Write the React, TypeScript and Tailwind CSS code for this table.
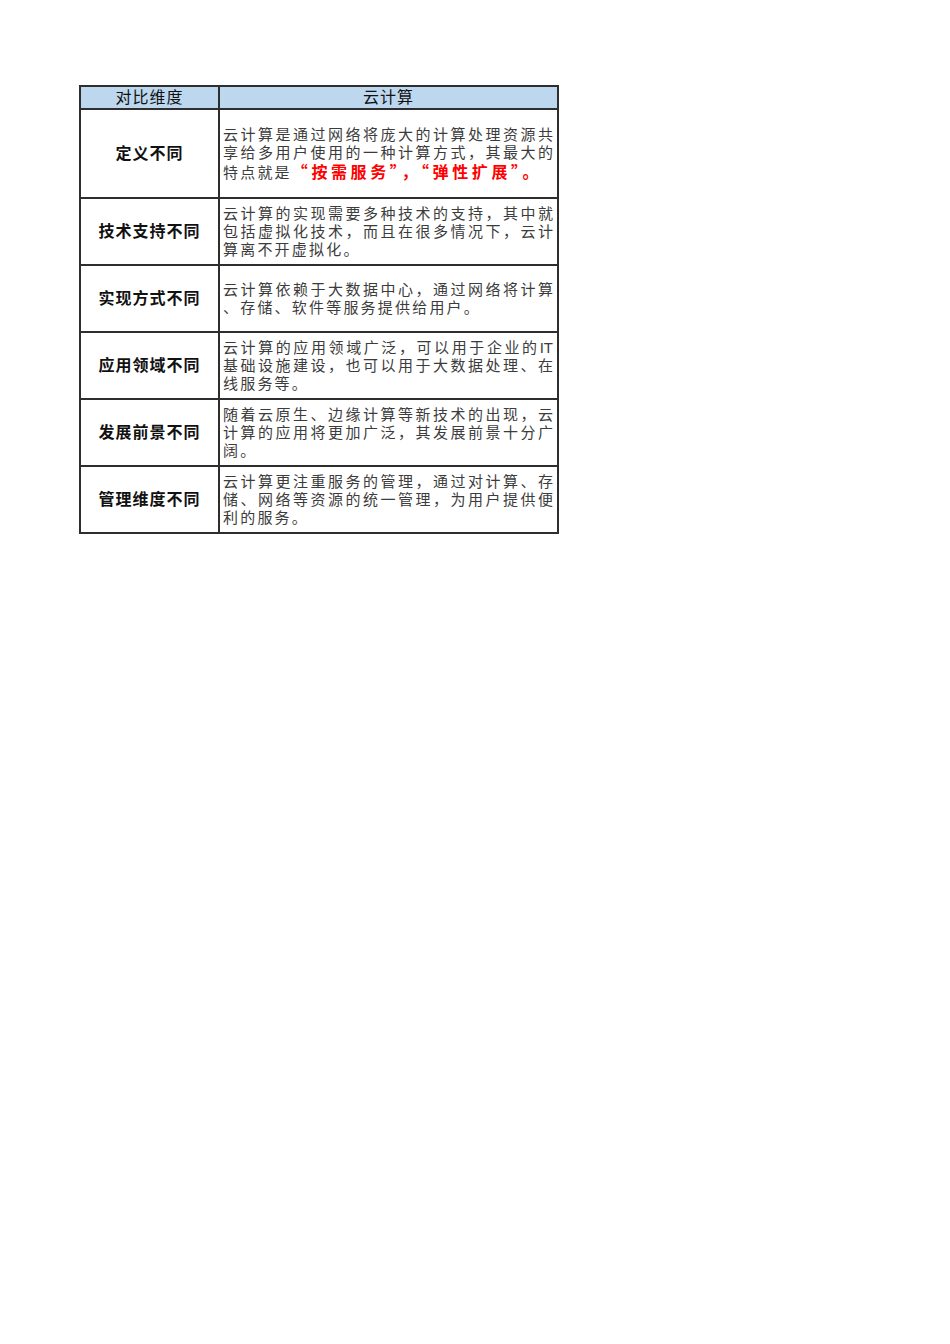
import React from 'react';

type Row = {
  label: string;
  lines: React.ReactNode[];
  height: string;
};

const rows: Row[] = [
  {
    label: '定义不同',
    height: 'h-[89px]',
    lines: [
      '云计算是通过网络将庞大的计算处理资源共',
      '享给多用户使用的一种计算方式，其最大的',
      <>
        特点就是
        <span className="font-['Noto_Sans_CJK_SC',sans-serif] text-[16px] font-bold tracking-[3.6px] text-[#ff0000]">
          “按需服务”，“弹性扩展”。
        </span>
      </>,
    ],
  },
  {
    label: '技术支持不同',
    height: 'h-[67px]',
    lines: ['云计算的实现需要多种技术的支持，其中就', '包括虚拟化技术，而且在很多情况下，云计', '算离不开虚拟化。'],
  },
  {
    label: '实现方式不同',
    height: 'h-[67px]',
    lines: ['云计算依赖于大数据中心，通过网络将计算', '、存储、软件等服务提供给用户。'],
  },
  {
    label: '应用领域不同',
    height: 'h-[67px]',
    lines: ['云计算的应用领域广泛，可以用于企业的IT', '基础设施建设，也可以用于大数据处理、在', '线服务等。'],
  },
  {
    label: '发展前景不同',
    height: 'h-[67px]',
    lines: ['随着云原生、边缘计算等新技术的出现，云', '计算的应用将更加广泛，其发展前景十分广', '阔。'],
  },
  {
    label: '管理维度不同',
    height: 'h-[67px]',
    lines: ['云计算更注重服务的管理，通过对计算、存', '储、网络等资源的统一管理，为用户提供便', '利的服务。'],
  },
];

const font = "font-['Liberation_Sans','Noto_Sans_CJK_SC',sans-serif]";

export default function App() {
  return (
    <div className={`min-h-[1344px] w-[950px] bg-white pl-[79px] pt-[85px] ${font}`}>
      <table className="w-[480px] table-fixed border-collapse border-2 border-[#2e2e2e]">
        <colgroup>
          <col className="w-[139px]" />
          <col />
        </colgroup>
        <thead>
          <tr className="h-[23px] bg-[#bdd7ee]">
            <th className="border-2 border-[#2e2e2e] p-0 text-center text-[16px] font-normal leading-[20px] tracking-[1px] text-[#111]">
              对比维度
            </th>
            <th className="border-2 border-[#2e2e2e] p-0 text-center text-[16px] font-normal leading-[20px] tracking-[1px] text-[#111]">
              云计算
            </th>
          </tr>
        </thead>
        <tbody>
          {rows.map((row) => (
            <tr key={row.label} className={row.height}>
              <td className="border-2 border-[#2e2e2e] p-0 text-center align-middle text-[16px] font-bold tracking-[1px] text-[#111]">
                {row.label}
              </td>
              <td className="border-2 border-[#2e2e2e] py-0 pl-[3px] pr-[4px] align-middle text-[15px] leading-[18px] text-[#3c3c3c]">
                {row.lines.map((line, i) => (
                  <span
                    key={i}
                    className={`block whitespace-nowrap tracking-[2.2px] ${
                      i < row.lines.length - 1 ? 'text-justify [text-align-last:justify] tracking-normal' : ''
                    }`}
                  >
                    {line}
                  </span>
                ))}
              </td>
            </tr>
          ))}
        </tbody>
      </table>
    </div>
  );
}
